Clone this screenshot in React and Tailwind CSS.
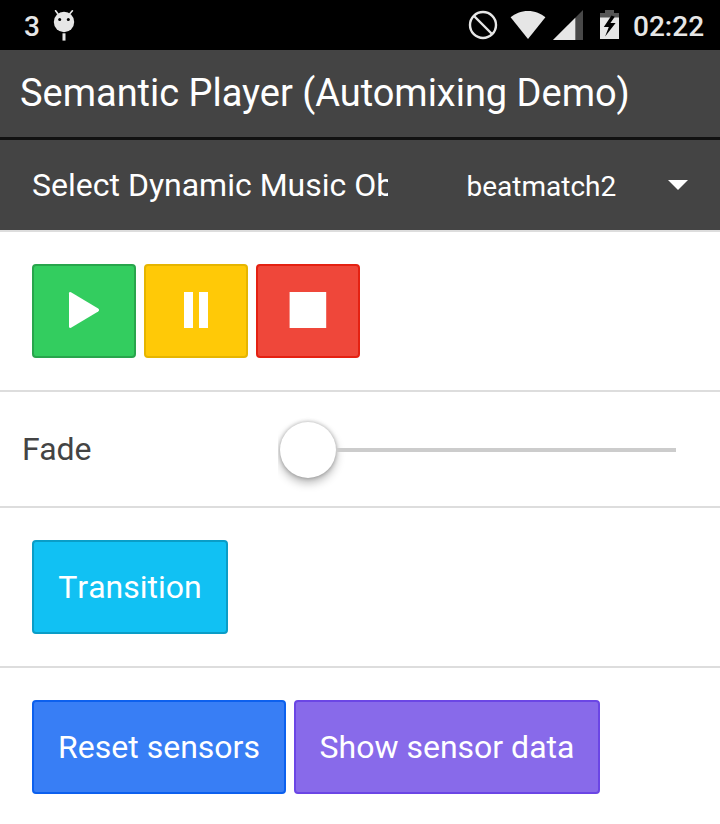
function StatusBar() {
  return (
    <div className="flex h-[50px] bg-black text-[#e6e6e6]">
      <span className="ml-6 mt-[10px] text-[28px] font-medium leading-[34px]">3</span>
      <svg className="ml-[13px] mt-[8px]" width="22" height="34" viewBox="0 0 22 34" fill="#e6e6e6">
        <path d="M2.6 2.8 5 6M19.4 2.8 16.6 6" stroke="#e6e6e6" strokeWidth="1.7" strokeLinecap="round" />
        <circle cx="11" cy="14" r="10.2" />
        <circle cx="6.7" cy="11.4" r="1.5" fill="#000" />
        <circle cx="15.3" cy="11.4" r="1.5" fill="#000" />
        <rect x="9.5" y="25.3" width="3" height="7.3" />
      </svg>
      <div className="ml-auto flex">
        <svg width="155" height="50" viewBox="468 0 155 50">
          <circle cx="483" cy="25" r="13" fill="none" stroke="#e6e6e6" strokeWidth="2.4" />
          <path d="M474 16 492 34" stroke="#e6e6e6" strokeWidth="2.4" />
          <path d="M528 39 510.6 17.3C515 13.5 521 11 528 11s13 2.5 17.4 6.3z" fill="#e6e6e6" />
          <path d="M583 10v30h-30z" fill="#484848" />
          <path d="M575.3 17.7V40H553z" fill="#e6e6e6" />
          <path d="M600 13h5v-3h9v3h5v5h-19z" fill="#555" />
          <path d="M600 17.5h19V39h-19z" fill="#e6e6e6" />
          <path d="M611.5 15.5 603.8 27h5l-3.7 9.5L615.6 23h-5.2l4.4-6.3z" fill="#000" />
        </svg>
        <span className="ml-[10px] mr-4 mt-[10px] w-[71px] whitespace-nowrap text-[28px] font-medium leading-[34px]">02:22</span>
      </div>
    </div>
  );
}

const base = "flex h-[94px] items-center justify-center rounded-[4px] border-2 text-[32px] text-white ";

export default function App() {
  return (
    <div className="h-[824px] w-[720px] overflow-hidden bg-white font-['Roboto',sans-serif] text-[#444]">
      <StatusBar />
      <header className="h-[90px] border-b-[3px] border-[#111] bg-[#444] pl-5">
        <h1 className="whitespace-nowrap text-[38px] leading-[86px] tracking-[-0.02px] text-white">Semantic Player (Automixing Demo)</h1>
      </header>
      <div className="flex h-[92px] items-center border-b-2 border-[#ddd] bg-[#444] pl-8 text-white">
        <span className="w-[356px] overflow-hidden whitespace-nowrap text-[32px]">Select Dynamic Music Object</span>
        <span className="ml-[78.5px] mt-[3px] w-[149.5px] whitespace-nowrap text-[28px]">beatmatch2</span>
        <span className="ml-[52px] h-0 w-0 border-x-[10px] border-t-[10px] border-x-transparent border-t-white" />
      </div>
      <div className="flex h-[160px] gap-2 border-b-2 border-[#ddd] px-8 pt-8">
        <button className={base + "w-[104px] border-[#28a54c] bg-[#33cd5f] pb-[2px]"}>
          <svg width="32" height="36" viewBox="0 0 32 36" fill="#fff">
            <path d="M1 1.2Q1-.4 3 .2L30.2 16.4Q32 18 30.2 19.6L3 35.8Q1 36.4 1 34.8z" />
          </svg>
        </button>
        <button className={base + "w-[104px] gap-[6px] border-[#e6b500] bg-[#ffc907] pb-[2px]"}>
          <span className="h-9 w-[9px] bg-white" />
          <span className="h-9 w-[9px] bg-white" />
        </button>
        <button className={base + "w-[104px] border-[#e42112] bg-[#ef473a] pb-[2px]"}>
          <svg width="38" height="36" viewBox="0 0 38 36" fill="#fff">
            <path d="M.6 0h36.6v36H.6z" />
          </svg>
        </button>
      </div>
      <div className="flex h-[116px] items-center border-b-2 border-[#ddd] pl-[22px]">
        <span className="w-[256px] text-[32px]">Fade</span>
        <div className="mt-[2px] flex h-[60px] w-[398px] items-center overflow-x-clip pl-[2px]">
          <span className="h-14 w-14 rounded-full bg-white shadow-[0_0_4px_rgba(0,0,0,0.3),0_5px_10px_rgba(0,0,0,0.28)]" />
          <span className="h-1 flex-1 bg-[#ccc]" />
        </div>
      </div>
      <div className="flex h-[160px] border-b-2 border-[#ddd] px-8 pt-8">
        <button className={base + "w-[196px] border-[#0a9dc7] bg-[#11c1f3] [font-kerning:none]"}>Transition</button>
      </div>
      <div className="flex h-[156px] gap-2 px-8 pt-8">
        <button className={base + "w-[254px] border-[#0c60ee] bg-[#387ef5]"}>Reset sensors</button>
        <button className={base + "w-[306px] border-[#6b46e5] bg-[#886aea]"}>Show sensor data</button>
      </div>
    </div>
  );
}
